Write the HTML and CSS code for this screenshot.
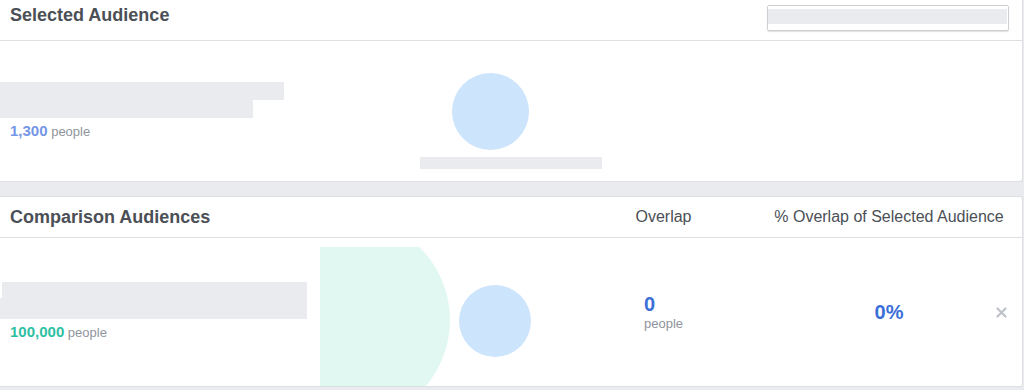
FILE: index.html
```html
<!doctype html>
<html>
    <head>
        <title>Audience Overlap</title>
        <meta charset="utf-8">
        <link rel="stylesheet" href="styles.css">
    </head>
    <body>
        <div class="card cardtop">
            <div class="cardhead headtop">
                <h2 class="title">Selected Audience</h2>
                <div class="picker"><div class="pickerfill"></div></div>
            </div>
            <div class="selectedrow">
                <div class="audinfo">
                    <div class="namebar bar284"></div>
                    <div class="namebar bar253"></div>
                    <div class="count"><b class="num numblue">1,300</b> people</div>
                </div>
                <div class="single">
                    <div class="dot"></div>
                    <div class="caption"></div>
                </div>
            </div>
        </div>

        <div class="card cardcompare">
            <div class="cardhead headcompare">
                <h2 class="title titlepad">Comparison Audiences</h2>
                <div class="colhead">Overlap</div>
                <div class="colhead colwide">% Overlap of Selected Audience</div>
                <div></div>
            </div>
            <div class="comparerow">
                <div class="audinfo">
                    <div class="namebar bar307 barshift"></div>
                    <div class="namebar bar307 bartall"></div>
                    <div class="count"><b class="num numgreen">100,000</b> people</div>
                </div>
                <div class="venn">
                    <svg width="220" height="139" viewBox="0 0 220 139">
                        <circle cx="28" cy="73" r="102" fill="#e0f8f1"/>
                        <circle cx="175" cy="74" r="36" fill="#cce4fc"/>
                    </svg>
                </div>
                <div class="overlap">
                    <div class="bignum">0</div>
                    <div class="unit">people</div>
                </div>
                <div class="pct">0%</div>
                <div class="close">
                    <svg width="11" height="11" viewBox="0 0 11 11">
                        <path d="M1.5 1.5 L9.5 9.5 M9.5 1.5 L1.5 9.5" stroke="#bec2c9" stroke-width="2.2" stroke-linecap="round"/>
                    </svg>
                </div>
            </div>
        </div>
    </body>
</html>
```

FILE: styles.css
```css
body {
    margin: 0;
    background-color: #e9ebee;
    font-family: "Liberation Sans", Arial, sans-serif;
}
.card {
    background-color: white;
    margin-right: 1px;
    border-right: 1px solid #dddfe2;
    border-bottom: 1px solid #dddfe2;
}
.cardtop {
    border-radius: 0 0 3px 0;
}
.cardcompare {
    margin-top: 14px;
    border-top: 1px solid #dddfe2;
    border-radius: 0 3px 3px 0;
}
.cardhead {
    height: 41px;
    box-sizing: border-box;
    border-bottom: 1px solid #dddfe2;
}
.headtop {
    display: flex;
    justify-content: space-between;
    align-items: flex-start;
    padding: 5px 13px 0 10px;
}
.title {
    margin: 0;
    font-size: 18px;
    line-height: 20px;
    font-weight: bold;
    color: #4b4f56;
}
.titlepad {
    padding-left: 10px;
}
.picker {
    width: 242px;
    height: 26px;
    box-sizing: border-box;
    padding: 3px 1px 0 0;
    border: 1px solid #ccd0d5;
    border-radius: 2px;
    box-shadow: 0 1px 1px rgba(0, 0, 0, 0.12);
}
.pickerfill {
    height: 15px;
    background-color: #e9ebee;
}
.selectedrow {
    display: flex;
    height: 140px;
}
.audinfo {
    width: 420px;
    align-self: center;
}
.namebar {
    height: 18px;
    background-color: #e9ebee;
}
.bar284 {
    width: 284px;
}
.bar253 {
    width: 253px;
}
.bar307 {
    width: 307px;
}
.barshift {
    height: 16px;
    width: 305px;
    margin-left: 2px;
}
.bartall {
    height: 21px;
}
.count {
    margin-top: 4px;
    padding-left: 10px;
    font-size: 13px;
    line-height: 18px;
    color: #90949c;
}
.num {
    font-size: 15px;
}
.numblue {
    color: #7596e6;
}
.numgreen {
    color: #2dbfa3;
}
.single {
    width: 182px;
    padding-top: 32px;
}
.dot {
    width: 77px;
    height: 77px;
    margin-left: 32px;
    border-radius: 50%;
    background-color: #cce4fc;
}
.caption {
    margin-top: 7px;
    height: 12px;
    background-color: #e9ebee;
}
.headcompare,
.comparerow {
    display: grid;
    grid-template-columns: 320px 220px 247px 204px 1fr;
    align-items: center;
}
.headcompare .title {
    grid-column: span 2;
}
.colhead {
    display: flex;
    justify-content: center;
    white-space: nowrap;
    font-size: 16px;
    color: #4b4f56;
}
.comparerow {
    height: 148px;
}
.comparerow .audinfo {
    width: 320px;
}
.venn {
    align-self: start;
    margin-top: 9px;
    height: 139px;
}
.venn svg {
    display: block;
}
.overlap {
    justify-self: center;
}
.bignum {
    font-size: 20px;
    line-height: 23px;
    font-weight: bold;
    color: #3b6fd8;
}
.unit {
    font-size: 13px;
    line-height: 15px;
    color: #90949c;
}
.pct {
    text-align: center;
    font-size: 20px;
    font-weight: bold;
    color: #3b6fd8;
}
.close {
    padding-left: 5px;
}
.close svg {
    display: block;
}
```
